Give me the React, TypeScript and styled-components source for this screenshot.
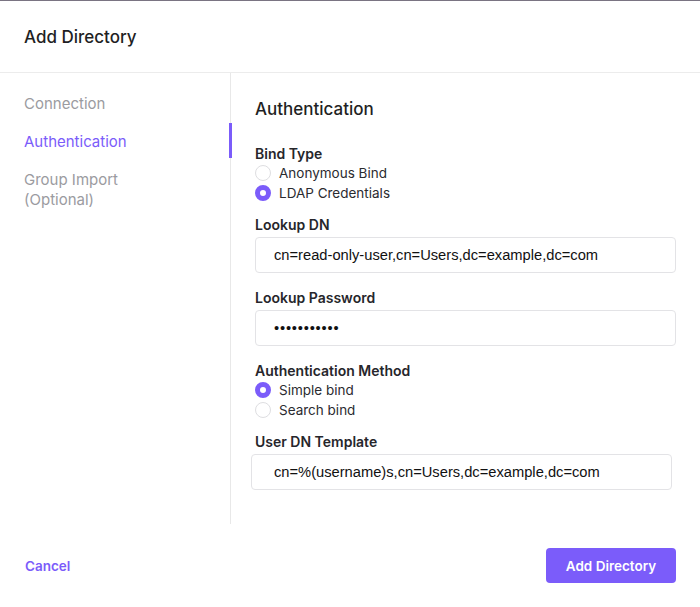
import React from "react";
import styled, { createGlobalStyle } from "styled-components";

const PURPLE = "#7b5cfa";

const Global = createGlobalStyle`
  html, body { margin: 0; padding: 0; background: #fff; }
  body { font-family: Inter, "Noto Sans", sans-serif; color: #1f1f24; -webkit-font-smoothing: antialiased; }
  * { box-sizing: border-box; }
`;

const Modal = styled.div`
  width: 700px;
  height: 607px;
  display: flex;
  flex-direction: column;
  border-top: 1px solid #7a7482;
  background: #fff;
`;

const Header = styled.header`
  height: 72px;
  display: flex;
  align-items: center;
  padding: 0 24px;
  border-bottom: 1px solid #ececec;
`;

const Title = styled.h1`
  margin: 0;
  font-size: 17px;
  font-weight: 500;
  color: #1f1f24;
`;

const Body = styled.div`
  display: flex;
  height: 451px;
`;

const Sidebar = styled.nav`
  width: 231px;
  flex: none;
  border-right: 1px solid #e8e8e8;
  padding-top: 12px;
  display: flex;
  flex-direction: column;
`;

const NavItem = styled.div<{ $active?: boolean }>`
  position: relative;
  padding: 9px 24px;
  font-size: 15px;
  line-height: 20px;
  color: ${(p) => (p.$active ? PURPLE : "#9b9b9f")};
  &::after {
    content: "";
    display: ${(p) => (p.$active ? "block" : "none")};
    position: absolute;
    right: -2px;
    top: 0;
    bottom: 3px;
    width: 3px;
    background: ${PURPLE};
  }
`;

const Content = styled.section`
  flex: 1;
  padding: 24px 24px 0 24px;
  display: flex;
  flex-direction: column;
`;

const Heading = styled.h2`
  margin: 0 0 23px;
  font-size: 17px;
  line-height: 24px;
  font-weight: 500;
  color: #1f1f24;
`;

const Group = styled.div<{ $after?: number }>`
  display: flex;
  flex-direction: column;
  margin-bottom: ${(p) => p.$after ?? 11}px;
`;

const Label = styled.div`
  font-size: 14px;
  line-height: 20px;
  font-weight: 600;
  color: #26262b;
`;

const RadioList = styled.div`
  display: flex;
  flex-direction: column;
  margin-top: -1px;
`;

const RadioRow = styled.label`
  display: flex;
  align-items: center;
  gap: 8px;
  height: 20px;
  font-size: 13.5px;
  color: #2b2b30;
`;

const RadioDot = styled.span<{ $checked?: boolean }>`
  width: 16px;
  height: 16px;
  border-radius: 50%;
  flex: none;
  background: #fff;
  border: ${(p) => (p.$checked ? `5px solid ${PURPLE}` : "1px solid #dedee1")};
`;

const Input = styled.input<{ $shift?: number; $dots?: boolean }>`
  margin: 2px 0 4px ${(p) => -(p.$shift ?? 0)}px;
  height: 36px;
  width: 421px;
  border: 1px solid #e3e3e6;
  border-radius: 4px;
  padding: 0 18px 0 ${(p) => 18 + (p.$shift ?? 0)}px;
  font-family: "Liberation Sans", Arial, sans-serif;
  font-size: 14.7px;
  letter-spacing: ${(p) => (p.$dots ? "0.8px" : "0")};
  color: #111;
  background: #fff;
  outline: none;
`;

const Footer = styled.footer`
  flex: 1;
  display: flex;
  align-items: center;
  justify-content: space-between;
  padding: 0 24px 0 25px;
`;

const LinkButton = styled.button`
  border: none;
  background: none;
  padding: 0;
  font-family: inherit;
  font-size: 13.5px;
  font-weight: 600;
  color: ${PURPLE};
`;

const PrimaryButton = styled.button`
  height: 35px;
  width: 130px;
  border: none;
  border-radius: 4px;
  background: ${PURPLE};
  color: #fff;
  font-family: inherit;
  font-size: 13.5px;
  font-weight: 600;
`;

function Radio({ label, checked }: { label: string; checked?: boolean }) {
  return (
    <RadioRow>
      <RadioDot $checked={checked} />
      {label}
    </RadioRow>
  );
}

export default function App() {
  return (
    <>
      <Global />
      <Modal>
        <Header>
          <Title>Add Directory</Title>
        </Header>
        <Body>
          <Sidebar>
            <NavItem>Connection</NavItem>
            <NavItem $active>Authentication</NavItem>
            <NavItem>
              Group Import
              <br />
              (Optional)
            </NavItem>
          </Sidebar>
          <Content>
            <Heading>Authentication</Heading>
            <Group $after={12}>
              <Label>Bind Type</Label>
              <RadioList>
                <Radio label="Anonymous Bind" />
                <Radio label="LDAP Credentials" checked />
              </RadioList>
            </Group>
            <Group>
              <Label>Lookup DN</Label>
              <Input readOnly value="cn=read-only-user,cn=Users,dc=example,dc=com" />
            </Group>
            <Group>
              <Label>Lookup Password</Label>
              <Input $dots readOnly type="password" value="password123" />
            </Group>
            <Group $after={12}>
              <Label>Authentication Method</Label>
              <RadioList>
                <Radio label="Simple bind" checked />
                <Radio label="Search bind" />
              </RadioList>
            </Group>
            <Group>
              <Label>User DN Template</Label>
              <Input $shift={4} readOnly value="cn=%(username)s,cn=Users,dc=example,dc=com" />
            </Group>
          </Content>
        </Body>
        <Footer>
          <LinkButton>Cancel</LinkButton>
          <PrimaryButton>Add Directory</PrimaryButton>
        </Footer>
      </Modal>
    </>
  );
}
